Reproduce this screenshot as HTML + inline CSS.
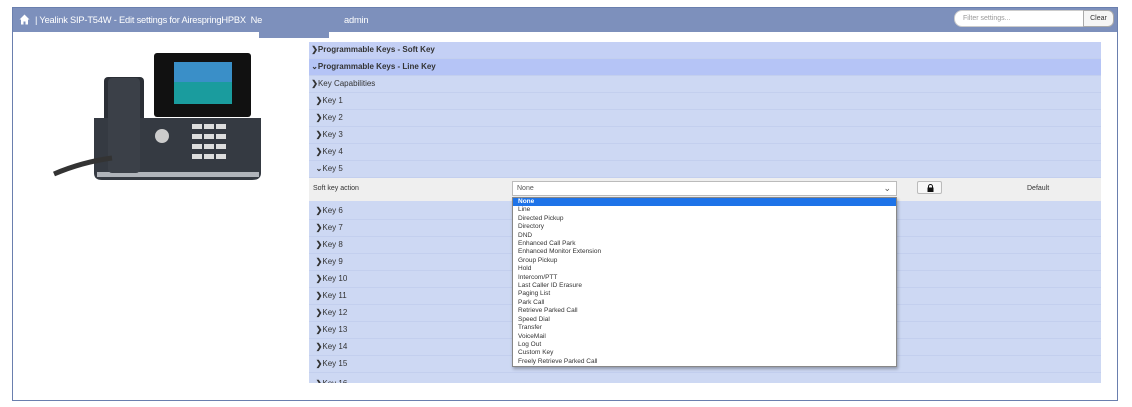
<!DOCTYPE html>
<html><head><style>
*{margin:0;padding:0;box-sizing:border-box}
body{width:1132px;height:407px;background:#fff;font-family:"Liberation Sans",sans-serif;position:relative;overflow:hidden}
.frame{position:absolute;left:12px;top:7px;width:1106px;height:394px;border:1px solid #6a7fae;background:#fff}
.hdr{position:absolute;left:0;top:0;width:1104px;height:24px;background:#7d90bc;color:#fff;font-size:9.3px;line-height:24px;padding-left:22px;letter-spacing:-0.2px}
.tab{position:absolute;left:246px;top:24px;width:70px;height:6px;background:#7d90bc}
.filter{position:absolute;left:954px;top:10px;width:130px;height:17px;border:1px solid #ccc;border-radius:8px 0 0 8px;background:#fff;font-size:7px;color:#999;padding:4px 8px}
.clear{position:absolute;left:1083px;top:10px;width:31px;height:17px;border:1px solid #aaa;border-radius:0 6px 6px 0;background:#f5f5f5;font-size:7px;color:#333;text-align:center;line-height:15px}
.panel{position:absolute;left:309px;top:42px;width:792px;height:341px;background:#cdd8f3;overflow:hidden}
.row{position:absolute;left:0;width:792px;height:17px;font-size:8px;color:#333;line-height:15px;border-bottom:1px solid #c3cfee}
.row b{font-weight:bold}
.sel{position:absolute;left:512px;top:181px;width:385px;height:15px;border:1px solid #bbb;background:#fff;font-size:7px;color:#555;padding:2px 4px;line-height:10px}
.list{position:absolute;left:512px;top:197px;width:385px;height:170px;border:1px solid #888;background:#fff;box-shadow:1px 2px 3px rgba(0,0,0,.3);font-size:6.5px;color:#333}
.list div{height:8.42px;line-height:8.4px;padding-left:5px}
</style></head><body>
<div class="frame">
<div class="hdr"><svg style="position:absolute;left:6px;top:6px" width="11" height="11" viewBox="0 0 11 11"><path d="M5.5 0.5L0.5 5.5H2V10.5H4.5V7.5H6.5V10.5H9V5.5H10.5Z" fill="#fff"/></svg>| Yealink SIP-T54W - Edit settings for AirespringHPBX &nbsp;Ne<span style="position:absolute;left:331px">admin</span></div>
<div class="tab"></div>
</div>
<div class="filter">Filter settings...</div><div class="clear">Clear</div>
<svg style="position:absolute;left:52px;top:50px" width="210" height="135" viewBox="0 0 210 135">
<rect x="102" y="3" width="97" height="64" rx="3" fill="#111"/>
<rect x="122" y="12" width="58" height="42" fill="#1a9c9e"/>
<rect x="122" y="12" width="58" height="20" fill="#3a8fc8"/>
<rect x="52" y="27" width="40" height="100" rx="4" fill="#2b2f36"/>
<path d="M42 68H209V123Q209 130 200 130H50Q42 130 42 123Z" fill="#353a42"/>
<rect x="45" y="122" width="162" height="5" fill="#b0b4ba"/>
<rect x="56" y="28" width="32" height="95" rx="4" fill="#3b4048"/>
<path d="M2 124Q30 112 60 108" stroke="#333" stroke-width="5" fill="none"/>
<circle cx="110" cy="86" r="7" fill="#ccc"/>
<g fill="#ddd"><rect x="140" y="74" width="10" height="5"/><rect x="152" y="74" width="10" height="5"/><rect x="164" y="74" width="10" height="5"/><rect x="140" y="84" width="10" height="5"/><rect x="152" y="84" width="10" height="5"/><rect x="164" y="84" width="10" height="5"/><rect x="140" y="94" width="10" height="5"/><rect x="152" y="94" width="10" height="5"/><rect x="164" y="94" width="10" height="5"/><rect x="140" y="104" width="10" height="5"/><rect x="152" y="104" width="10" height="5"/><rect x="164" y="104" width="10" height="5"/></g>
</svg>
<div class="panel">
<div class="row" style="top:0;background:#c4d0f5"><b>&nbsp;&#10095;Programmable Keys - Soft Key</b></div>
<div class="row" style="top:17px;background:#b5c4f6"><b>&nbsp;&#8964;Programmable Keys - Line Key</b></div>
<div class="row" style="top:34px">&nbsp;<b>&#10095;</b>Key Capabilities</div>
<div class="row" style="top:51px">&nbsp;&nbsp;&nbsp;<b>&#10095;</b>Key 1</div>
<div class="row" style="top:68px">&nbsp;&nbsp;&nbsp;<b>&#10095;</b>Key 2</div>
<div class="row" style="top:85px">&nbsp;&nbsp;&nbsp;<b>&#10095;</b>Key 3</div>
<div class="row" style="top:102px">&nbsp;&nbsp;&nbsp;<b>&#10095;</b>Key 4</div>
<div class="row" style="top:119px">&nbsp;&nbsp;&nbsp;<b>&#8964;</b>Key 5</div>
<div class="row" style="top:136px;height:23px;background:#efefef;font-size:7px;line-height:22px;padding-left:4px;border:none">Soft key action<span style="position:absolute;left:718px;">Default</span>
<span style="position:absolute;left:608px;top:3px;width:25px;height:13px;border:1px solid #bbb;border-radius:2px;background:#f7f7f7"><svg style="position:absolute;left:9px;top:2px" width="7" height="8" viewBox="0 0 7 8"><path d="M1.5 3.5V2.5A2 2 0 0 1 5.5 2.5V3.5" stroke="#111" fill="none"/><rect x="0.5" y="3.5" width="6" height="4.5" fill="#111"/></svg></span></div>
<div class="row" style="top:161px">&nbsp;&nbsp;&nbsp;<b>&#10095;</b>Key 6</div>
<div class="row" style="top:178px">&nbsp;&nbsp;&nbsp;<b>&#10095;</b>Key 7</div>
<div class="row" style="top:195px">&nbsp;&nbsp;&nbsp;<b>&#10095;</b>Key 8</div>
<div class="row" style="top:212px">&nbsp;&nbsp;&nbsp;<b>&#10095;</b>Key 9</div>
<div class="row" style="top:229px">&nbsp;&nbsp;&nbsp;<b>&#10095;</b>Key 10</div>
<div class="row" style="top:246px">&nbsp;&nbsp;&nbsp;<b>&#10095;</b>Key 11</div>
<div class="row" style="top:263px">&nbsp;&nbsp;&nbsp;<b>&#10095;</b>Key 12</div>
<div class="row" style="top:280px">&nbsp;&nbsp;&nbsp;<b>&#10095;</b>Key 13</div>
<div class="row" style="top:297px">&nbsp;&nbsp;&nbsp;<b>&#10095;</b>Key 14</div>
<div class="row" style="top:314px">&nbsp;&nbsp;&nbsp;<b>&#10095;</b>Key 15</div>
<div class="row" style="top:334px">&nbsp;&nbsp;&nbsp;<b>&#10095;</b>Key 16</div>
</div>
<div class="sel">None<span style="position:absolute;right:5px;top:1px;font-size:9px">&#8964;</span></div>
<div class="list">
<div style="background:#1e73e8;color:#fff;font-weight:bold">None</div>
<div>Line</div><div>Directed Pickup</div><div>Directory</div><div>DND</div><div>Enhanced Call Park</div><div>Enhanced Monitor Extension</div><div>Group Pickup</div><div>Hold</div><div>Intercom/PTT</div><div>Last Caller ID Erasure</div><div>Paging List</div><div>Park Call</div><div>Retrieve Parked Call</div><div>Speed Dial</div><div>Transfer</div><div>VoiceMail</div><div>Log Out</div><div>Custom Key</div><div>Freely Retrieve Parked Call</div>
</div>
</body></html>
